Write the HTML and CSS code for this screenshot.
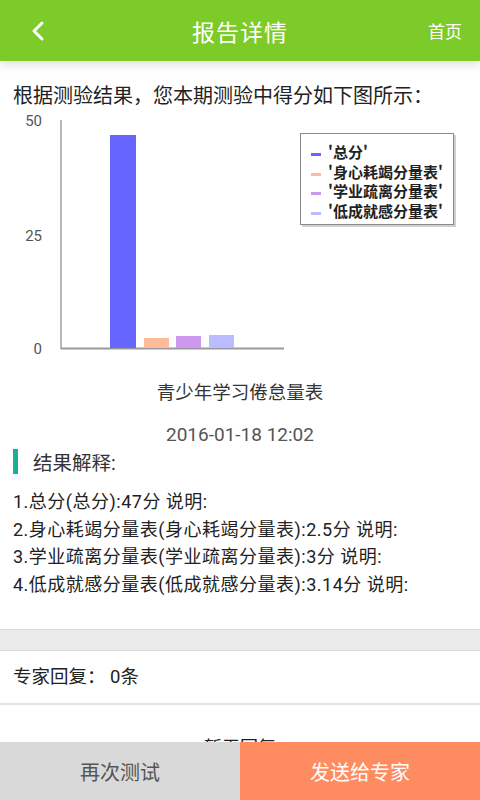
FILE: index.html
```html
<!DOCTYPE html>
<html lang="zh-CN">
<head>
    <meta charset="UTF-8">
    <meta name="viewport" content="width=device-width, initial-scale=1.0">
    <title>报告详情</title>
    <link rel="stylesheet" href="styles.css">
</head>
<body>
    <header class="topbar">
        <a class="back" href="#">
            <svg width="16" height="22" viewBox="0 0 16 22"><path d="M12 3 L4 11 L12 19" fill="none" stroke="#fff" stroke-width="3" stroke-linecap="round" stroke-linejoin="round"/></svg>
        </a>
        <h1>报告详情</h1>
        <a class="home" href="#">首页</a>
    </header>

    <main>
        <p class="intro">根据测验结果，您本期测验中得分如下图所示：</p>

        <div class="chart">
            <svg width="480" height="250" viewBox="0 0 480 250">
                <g class="axis-label">
                    <text x="42" y="16" text-anchor="end">50</text>
                    <text x="42" y="131" text-anchor="end">25</text>
                    <text x="42" y="244" text-anchor="end">0</text>
                </g>
                <line x1="61" y1="10" x2="61" y2="239" stroke="#a0a0a0" stroke-width="1.5"/>
                <line x1="61" y1="238.5" x2="284" y2="238.5" stroke="#999" stroke-width="2"/>
                <rect x="110" y="25" width="26" height="213" fill="#6666ff"/>
                <rect x="144" y="228" width="25" height="10" fill="#ffbb99"/>
                <rect x="176" y="226" width="25" height="12" fill="#cc99ee"/>
                <rect x="209" y="225" width="25" height="13" fill="#bbbbff"/>
            </svg>
            <ul class="legend">
                <li><i class="swatch total"></i>'总分'</li>
                <li><i class="swatch burnout"></i>'身心耗竭分量表'</li>
                <li><i class="swatch detach"></i>'学业疏离分量表'</li>
                <li><i class="swatch low"></i>'低成就感分量表'</li>
            </ul>
        </div>

        <p class="scale-name">青少年学习倦怠量表</p>
        <p class="date">2016-01-18 12:02</p>

        <div class="section-title">
            <span class="mark"></span>
            <span>结果解释:</span>
        </div>

        <ul class="results">
            <li>1.总分(总分):47分 说明:</li>
            <li>2.身心耗竭分量表(身心耗竭分量表):2.5分 说明:</li>
            <li>3.学业疏离分量表(学业疏离分量表):3分 说明:</li>
            <li>4.低成就感分量表(低成就感分量表):3.14分 说明:</li>
        </ul>

        <div class="gap"></div>

        <p class="reply-count">专家回复： 0条</p>
        <p class="no-reply">暂无回复</p>
    </main>

    <footer class="actions">
        <button class="retest" type="button">再次测试</button>
        <button class="send" type="button">发送给专家</button>
    </footer>
</body>
</html>
```

FILE: styles.css
```css
body {
    margin: 0;
    padding: 0;
    background-color: #fff;
    color: #222;
    font-family: Roboto, "Noto Sans CJK SC", sans-serif;
    overflow: hidden;
}
p {
    margin: 0;
}
.topbar {
    height: 61px;
    background-color: #7dcb29;
    display: grid;
    grid-template-columns: 1fr auto 1fr;
    align-items: center;
    padding: 0 18px;
    box-shadow: 0 3px 10px rgba(0, 0, 0, 0.15);
    position: relative;
    z-index: 1;
}
.topbar h1 {
    margin: 0;
    color: #fff;
    font-size: 23px;
    font-weight: normal;
    letter-spacing: 1px;
}
.back {
    display: flex;
    margin-left: 12px;
}
.home {
    color: #fff;
    text-decoration: none;
    font-size: 17px;
    justify-self: end;
}
.intro {
    margin: 21px 13px 0;
    font-size: 20px;
    line-height: 28px;
}
.chart {
    position: relative;
    height: 250px;
}
.chart svg {
    display: block;
}
.axis-label text {
    font-family: Roboto, sans-serif;
    font-size: 15px;
    fill: #555;
}
.legend {
    position: absolute;
    left: 300px;
    top: 23px;
    width: 142px;
    margin: 0;
    padding: 8px 0 4px 10px;
    list-style: none;
    background: #fff;
    border: 1.5px solid #8a8a8a;
    box-shadow: 2px 2px 0 #d0d0d0;
    font-family: "Noto Sans CJK SC", sans-serif;
    font-size: 15px;
    font-weight: bold;
    line-height: 19.5px;
    color: #222;
}
.legend li {
    display: flex;
    align-items: center;
    white-space: nowrap;
}
.swatch {
    width: 10px;
    height: 3px;
    margin: 6px 7px 0 0;
}
.total { background: #6666ff; }
.burnout { background: #ffbb99; }
.detach { background: #cc99ee; }
.low { background: #bbbbff; }
.scale-name {
    margin-top: 20px;
    text-align: center;
    font-size: 18.5px;
    line-height: 26px;
    color: #333;
}
.date {
    margin-top: 16px;
    text-align: center;
    font-size: 19px;
    line-height: 26px;
    color: #555;
}
.section-title {
    margin: 1px 13px 0;
    height: 25px;
    display: flex;
    align-items: center;
    font-size: 19.5px;
    color: #333;
}
.mark {
    width: 5px;
    height: 25px;
    background-color: #17b194;
    margin-right: 15px;
}
.results {
    list-style: none;
    margin: 14px 13px 0;
    padding: 0;
    font-size: 18px;
    letter-spacing: 0.5px;
    line-height: 27.5px;
}
.gap {
    margin-top: 31px;
    height: 20px;
    background-color: #ebebeb;
    border-top: 1px solid #d9d9d9;
    border-bottom: 1px solid #d9d9d9;
}
.reply-count {
    padding: 0 13px;
    line-height: 52px;
    font-size: 18.5px;
    border-bottom: 2px solid #e2e2e2;
}
.no-reply {
    padding-top: 30px;
    text-align: center;
    font-size: 18px;
    line-height: 26px;
}
.actions {
    position: fixed;
    left: 0;
    right: 0;
    bottom: 0;
    height: 58px;
    display: flex;
}
.actions button {
    flex: 1;
    border: none;
    font-family: "Noto Sans CJK SC", sans-serif;
    font-size: 20px;
    cursor: pointer;
}
.retest {
    background-color: #d9d9d9;
    color: #555;
}
.send {
    background-color: #ff8b60;
    color: #fff;
}
```
